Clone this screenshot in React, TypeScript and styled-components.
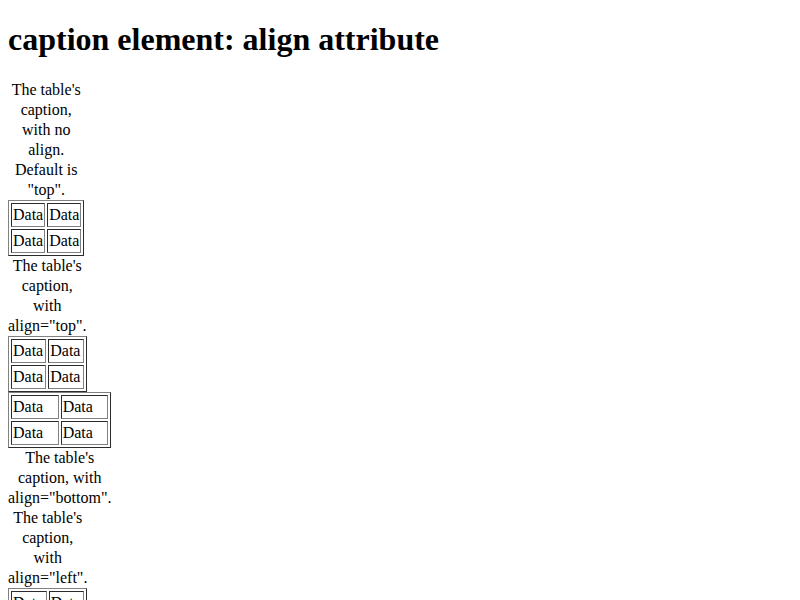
import React from 'react';
import styled, { createGlobalStyle } from 'styled-components';

const GlobalStyle = createGlobalStyle`
  body {
    margin: 0;
    padding: 8px;
    font-family: "Liberation Serif", "Times New Roman", serif;
    font-size: 16px;
    line-height: 20px;
    color: #000;
    background: #fff;
  }
`;

const Title = styled.h1`
  font-size: 2em;
  font-weight: bold;
  line-height: normal;
  margin: 13.44px 0 21.44px;
`;

const Table = styled.table`
  border: 1px outset #808080;
  border-spacing: 2px;
  border-collapse: separate;
  line-height: 20px;
`;

const Caption = styled.caption<{ $side?: 'top' | 'bottom' }>`
  caption-side: ${(p) => p.$side || 'top'};
  text-align: center;
`;

const Cell = styled.td`
  border: 1px inset #808080;
  padding: 1px;
`;

type Demo = { caption: string; side?: 'top' | 'bottom' };

const demos: Demo[] = [
  { caption: 'The table\'s caption, with no align. Default is "top".' },
  { caption: 'The table\'s caption, with align="top".' },
  { caption: 'The table\'s caption, with align="bottom".', side: 'bottom' },
  { caption: 'The table\'s caption, with align="left".' },
  { caption: 'The table\'s caption, with align="right".' },
];

const App: React.FC = () => {
  return (
    <>
      <GlobalStyle />
      <Title>caption element: align attribute</Title>
      {demos.map((d, i) => (
        <Table key={i}>
          <Caption $side={d.side}>{d.caption}</Caption>
          <tbody>
            <tr>
              <Cell>Data</Cell>
              <Cell>Data</Cell>
            </tr>
            <tr>
              <Cell>Data</Cell>
              <Cell>Data</Cell>
            </tr>
          </tbody>
        </Table>
      ))}
    </>
  );
};

export default App;
